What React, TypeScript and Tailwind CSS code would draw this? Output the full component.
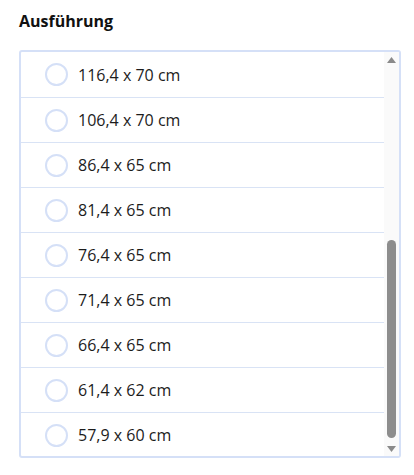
const sizes = [
  '116,4 x 70 cm',
  '106,4 x 70 cm',
  '86,4 x 65 cm',
  '81,4 x 65 cm',
  '76,4 x 65 cm',
  '71,4 x 65 cm',
  '66,4 x 65 cm',
  '61,4 x 62 cm',
  '57,9 x 60 cm',
];

function Arrow({ down }: { down?: boolean }) {
  return (
    <div className="flex h-[15px] items-center justify-center">
      <svg width="9" height="6" viewBox="0 0 9 6" className={down ? 'rotate-180' : ''}>
        <polygon points="4.5,0 9,6 0,6" fill="#8a8a8a" />
      </svg>
    </div>
  );
}

export default function App() {
  return (
    <div className="w-[414px] h-[475px] bg-white px-[19px] pt-[10px] font-['Open_Sans',sans-serif] text-[#1c1c1c]">
      <h2 className="text-[16px] leading-[22px] font-bold text-[#111]">Ausführung</h2>
      <div className="mt-[18px] flex h-[408px] w-[382px] overflow-hidden rounded-[3px] border-2 border-[#d5e0f7]">
        <div className="flex-1">
          {sizes.map((s, i) => (
            <label
              key={s}
              className={`flex h-[45px] items-center gap-[10px] pl-[24px] ${i > 0 ? 'border-t border-[#d9e3f5]' : ''}`}
            >
              <span className="h-[23px] w-[23px] shrink-0 rounded-full border-2 border-[#d5e0f7] bg-white" />
              <span className="text-[16px] leading-[22px]">{s}</span>
            </label>
          ))}
        </div>
        <div className="flex w-[15px] flex-col bg-[#fafafa]">
          <Arrow />
          <div className="flex flex-1 flex-col justify-end px-[3px] pb-[3px]">
            <div className="h-[198px] rounded-full bg-[#8d8d8d]" />
          </div>
          <Arrow down />
        </div>
      </div>
    </div>
  );
}
